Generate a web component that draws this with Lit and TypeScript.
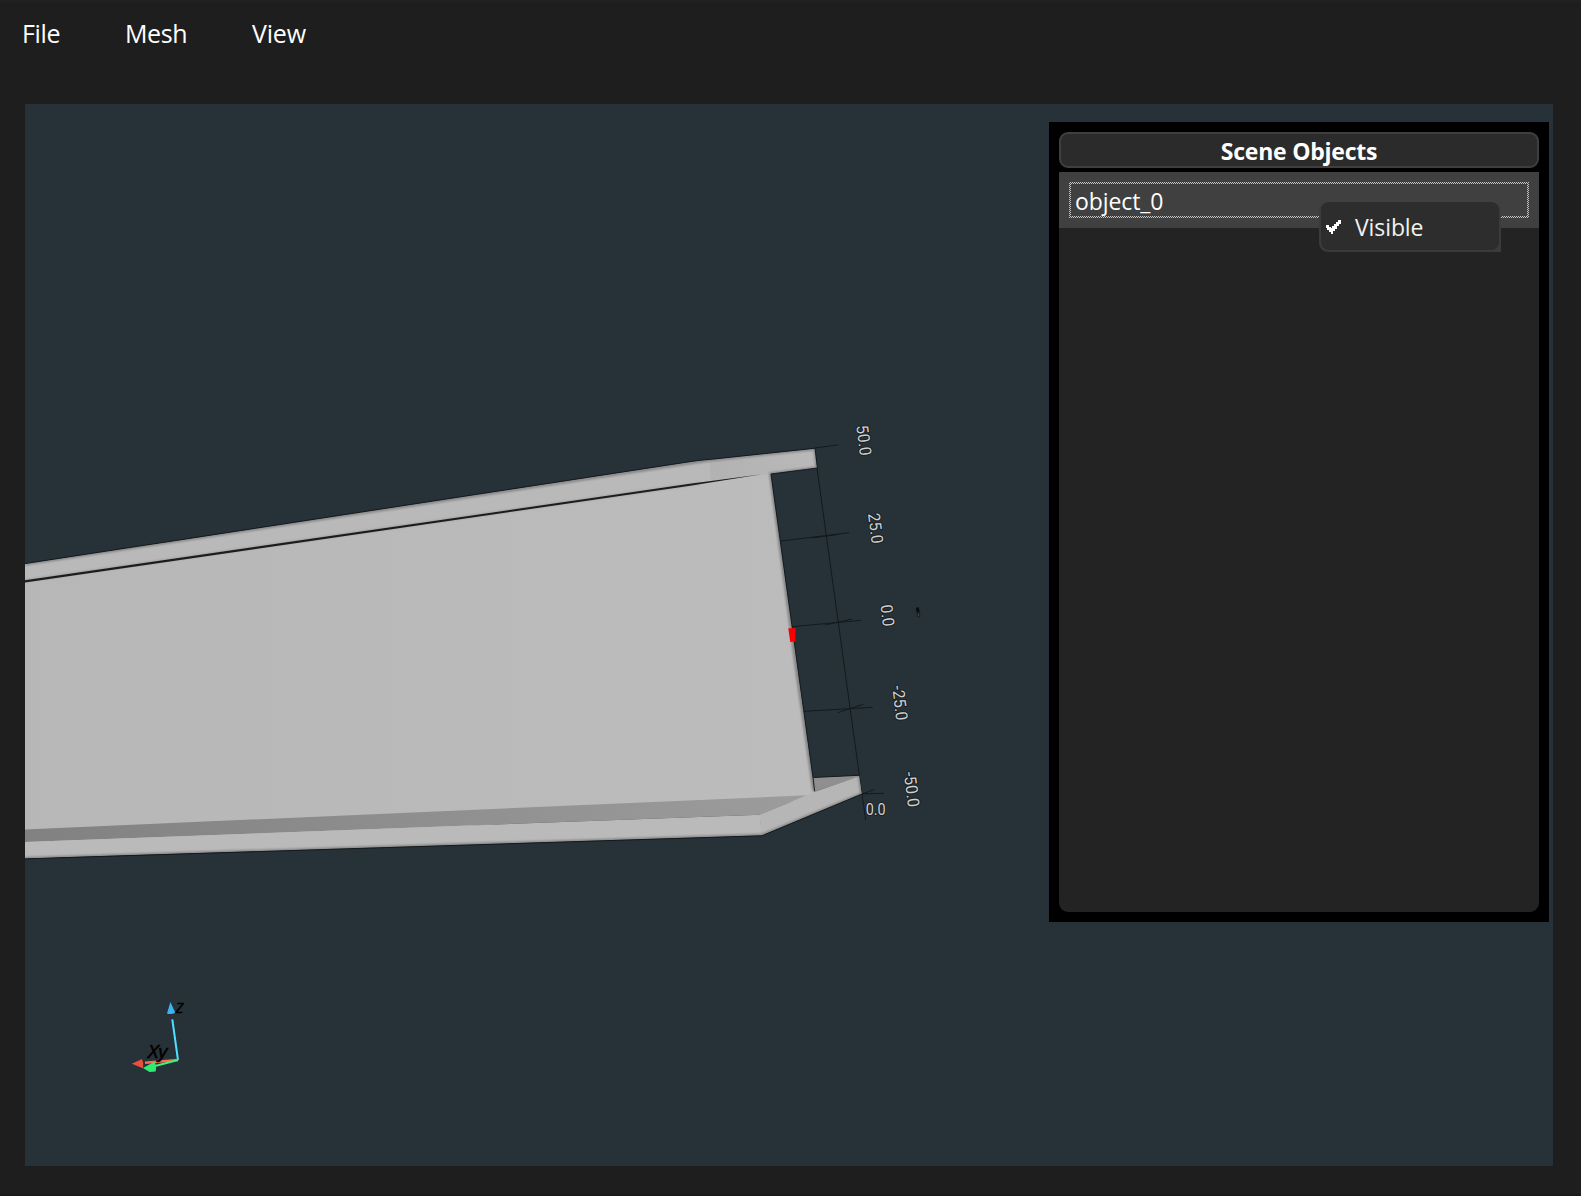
import { LitElement, html, svg, css } from "lit";
import { customElement } from "lit/decorators.js";

const TICK_LABELS = [
  { text: "50.0", x: 864, y: 440.3, len: 30.5 },
  { text: "25.0", x: 875.7, y: 528.3, len: 30.5 },
  { text: "0.0", x: 887.5, y: 615.5, len: 22 },
  { text: "-25.0", x: 900, y: 703.0, len: 35 },
  { text: "-50.0", x: 911.7, y: 789.4, len: 35.5 },
];

@customElement("scene-view")
export class SceneView extends LitElement {
  static styles = css`
    :host { display: block; }
    svg { display: block; width: 100%; height: 100%; }
    .axis { stroke: #13191c; stroke-width: 1; fill: none; }
    .label { font-family: Roboto, sans-serif; font-size: 16.5px; fill: #d0d0d0; }
    .halo { stroke: #192023; stroke-width: 2.4; }
    .face { stroke: #d0d0d0; stroke-width: 0.3; }
    .gizmo { font-family: "Open Sans", sans-serif; font-style: italic; fill: #000; stroke: #000; stroke-width: 0.5; }
    .z { font-size: 14.5px; }
    .xy { font-size: 17.5px; }
  `;
  render() {
    return html`<svg viewBox="25 104 1528 1062">
      <defs>
        <linearGradient id="web" x1="0" x2="1" y1="0" y2="0"><stop offset="0" stop-color="#b7b7b7" /><stop offset="1" stop-color="#bcbcbc" /></linearGradient>
        <linearGradient id="shade" x1="0" x2="1" y1="0" y2="0"><stop offset="0" stop-color="#818181" /><stop offset="1" stop-color="#9c9c9c" /></linearGradient>
        <linearGradient id="flange" gradientUnits="userSpaceOnUse" x1="709" x2="817" y1="0" y2="0"><stop offset="0" stop-color="#b2b2b2" /><stop offset="1" stop-color="#b9b9b9" /></linearGradient>
        <filter id="soft" filterUnits="userSpaceOnUse" x="0" y="400" width="900" height="500"><feGaussianBlur stdDeviation="1.3" /></filter>
        <clipPath id="body"><path d="M20 565 L25 564 L680 463.5 Q700 460.4 710 459.8 L815 448.7 L817 468 L770.7 473.7 L812.7 777.5 L859.3 775.3 L861.7 794 L761.7 835.3 L20 858.5Z" /></clipPath>
      </defs>
      <g class="axis">
        <path d="M817 468 L859.3 775 L865.7 820" />
        <path d="M815 448 L838.3 444.8 M781 541 L849.3 532.7 M791.7 626.7 L861 620.3 M804 711.3 L872.7 707.3 M861.7 794 L884 793.3" />
        <path d="M812 538 L838 534.5 M825 625 L852 619 M837.7 712.7 L863.3 704.3 M861 794.5 L874 789.6" />
      </g>
      <g clip-path="url(#body)">
        <path fill="url(#web)" d="M20 560 L770 470 L815 800 L20 860Z" />
        <path fill="#b9b9b9" d="M20 564.7 L710 458 L712 481 L20 582Z" />
        <path fill="url(#flange)" d="M709 458 L815 446 L818 468 L771 474 L711 481.3Z" />
        <path fill="none" stroke="#9f9f9f" stroke-width="2.6" filter="url(#soft)" d="M20 581.5 L700 483.2" />
        <path fill="none" stroke="#a4a4a4" stroke-width="3" filter="url(#soft)" d="M770.7 473.7 L814 792" />
        <path fill="#1c1c1c" d="M20 581 L690 483.8 L762 474.2 L690 485.8 L20 583.2Z" />
        <path fill="url(#shade)" d="M20 829.6 L807.3 795.3 L760 814.7 L20 842.2Z" />
        <path fill="#8f8f8f" d="M812.7 777.5 L859 775.3 L859 777 L814.3 791.7Z" />
        <path fill="#bababa" d="M20 842.2 L760 814.7 L762 837 L20 860Z" />
        <path fill="#b6b6b6" d="M759.5 814.7 L807 795.3 L814 792 L859 776.5 L862 794 L761.5 836Z" />
        <path fill="none" stroke="#858585" stroke-width="3" filter="url(#soft)" d="M25 564 L710 460 L815 448.7 L817 468 L770.7 473.7 L796.7 670 L814 790 M859.3 775.3 L861.7 794 L761.7 835.3 L25 858.5" />
      </g>
      <path fill="none" stroke="#151b1e" stroke-width="1" d="M25 563.6 L680 463.2 Q700 460 710 459.4 L815 448.2 L817.4 468 L771 474 L813 777.5 L859.3 775.3 M861.9 794 L761.8 835.8 L25 858.9" />
      <path stroke="#1b2023" stroke-width="1" d="M813 777.5 L814.6 791" />
      <path fill="#fb0000" d="M788.3 628.3H795.4V641.3L790.3 642Z" />
      ${TICK_LABELS.map(
        (l) => svg`<text class="label" text-anchor="middle" stroke="#192023" stroke-width="2" paint-order="stroke" textLength=${l.len} lengthAdjust="spacingAndGlyphs" transform="translate(${l.x} ${l.y}) rotate(83)" y="5.8">${l.text}</text>`
      )}
      <text class="label" text-anchor="middle" stroke="#192023" stroke-width="2" paint-order="stroke" textLength="20" lengthAdjust="spacingAndGlyphs" x="875.7" y="815.2">0.0</text>
      <path fill="none" stroke="#0a0d0f" stroke-width="3" d="M917.4 607.5 L918.2 612.5" />
      <path fill="none" stroke="#171c1f" stroke-width="3.4" d="M918.2 612.5 L918.8 617.3" />
      <path fill="none" stroke="#4a5052" stroke-width="1" d="M918.4 613.5 L918.7 616.3" />

      <path stroke="#4de1ff" stroke-width="2" d="M172.3 1019.3 L178 1060" />
      <path stroke="#ff6a50" stroke-width="2.4" d="M178 1060 L145 1062.8" />
      <path stroke="#35f57b" stroke-width="2" d="M178 1060 L155 1066" />
      <path fill="#3cb2f2" d="M170.4 1002 L167 1013.4 Q171 1015 175.3 1012.8Z" />
      <path fill="#ec4f3d" d="M131.8 1063.7 L142 1059 Q144 1063 143 1068.2Z" />
      <path fill="#2fec71" d="M143 1068 L154.4 1061.8 Q157 1066 155.6 1071.4 L149.5 1072Z" />
      <text class="gizmo z" x="175.6" y="1012.8">Z</text>
      <text class="gizmo xy" x="148" y="1057.8" textLength="19.5" lengthAdjust="spacingAndGlyphs">Xy</text>
    </svg>`;
  }
}

@customElement("app-root")
export class AppRoot extends LitElement {
  static styles = css`
    * { box-sizing: border-box; }
    :host { display: block; font-family: "Open Sans", "Noto Sans", sans-serif; color: #fff; }
    .window { width: 1581px; height: 1196px; background: #1e1e1e; border-top: 2px solid #1e231e; border-bottom: 2px solid #1a1a1a; padding: 0 28px 28px 25px; display: flex; flex-direction: column; overflow: hidden; }
    .menubar { height: 102px; flex: none; display: flex; font-size: 25px; line-height: 34px; padding-top: 14px; }
    .menubar span { white-space: nowrap; }
    .file { width: 103px; margin-left: -3px; letter-spacing: -0.35px; }
    .mesh { width: 127px; letter-spacing: -0.4px; }
    .view { letter-spacing: -0.2px; }
    .viewport { flex: 1; min-height: 0; position: relative; background: #273238; }
    scene-view { width: 1528px; height: 1062px; }
    .panel { position: absolute; right: 4px; top: 18px; width: 500px; height: 800px; background: #000; padding: 10px; display: flex; flex-direction: column; gap: 4px; }
    .title { height: 36px; flex: none; background: #2b2b2b; border: 2px solid #3f3f3f; border-radius: 9px; text-align: center; font-weight: 700; font-size: 23px; line-height: 34px; letter-spacing: -0.24px; }
    .list { flex: 1; background: #232323; border-radius: 0 0 9px 9px; }
    .item { height: 56px; background: #404040; padding: 10px; }
    .focus { height: 36px; padding: 2px; background: repeating-conic-gradient(#c4c4c4 0 25%, #404040 0 50%) 0 0 / 2px 2px; }
    .name { height: 32px; background: #404040; padding-left: 4px; font-size: 23px; line-height: 35px; letter-spacing: -0.1px; }
    .popup { position: absolute; left: 1294px; top: 98px; width: 182px; height: 50px; background: #3b3b3b; border-radius: 9px 9px 0 9px; padding: 0 2px 2px 2px; }
    .entry { height: 48px; background: #2d2d2d; border-radius: 8px; display: flex; align-items: center; padding: 2px 0 0 5px; font-size: 23px; line-height: 34px; letter-spacing: -0.1px; color: #f2f2f2; }
    .check { width: 15px; height: 14px; margin-right: 14px; flex: none; }
  `;
  render() {
    return html`<div class="window">
      <nav class="menubar"><span class="file">File</span><span class="mesh">Mesh</span><span class="view">View</span></nav>
      <main class="viewport">
        <scene-view></scene-view>
        <section class="panel">
          <div class="title">Scene Objects</div>
          <div class="list"><div class="item"><div class="focus"><div class="name">object_0</div></div></div></div>
        </section>
        <div class="popup">
          <div class="entry">
            <svg class="check" viewBox="0 0 15 14"><path fill="#fff" d="M0 5H3V7H5V8H6V6H8V4H10V2H12V0H15V4H13V6H11V9H9V11H7V14H5V12H3V10H1V8H0Z" /></svg>
            <span>Visible</span>
          </div>
        </div>
      </main>
    </div>`;
  }
}
